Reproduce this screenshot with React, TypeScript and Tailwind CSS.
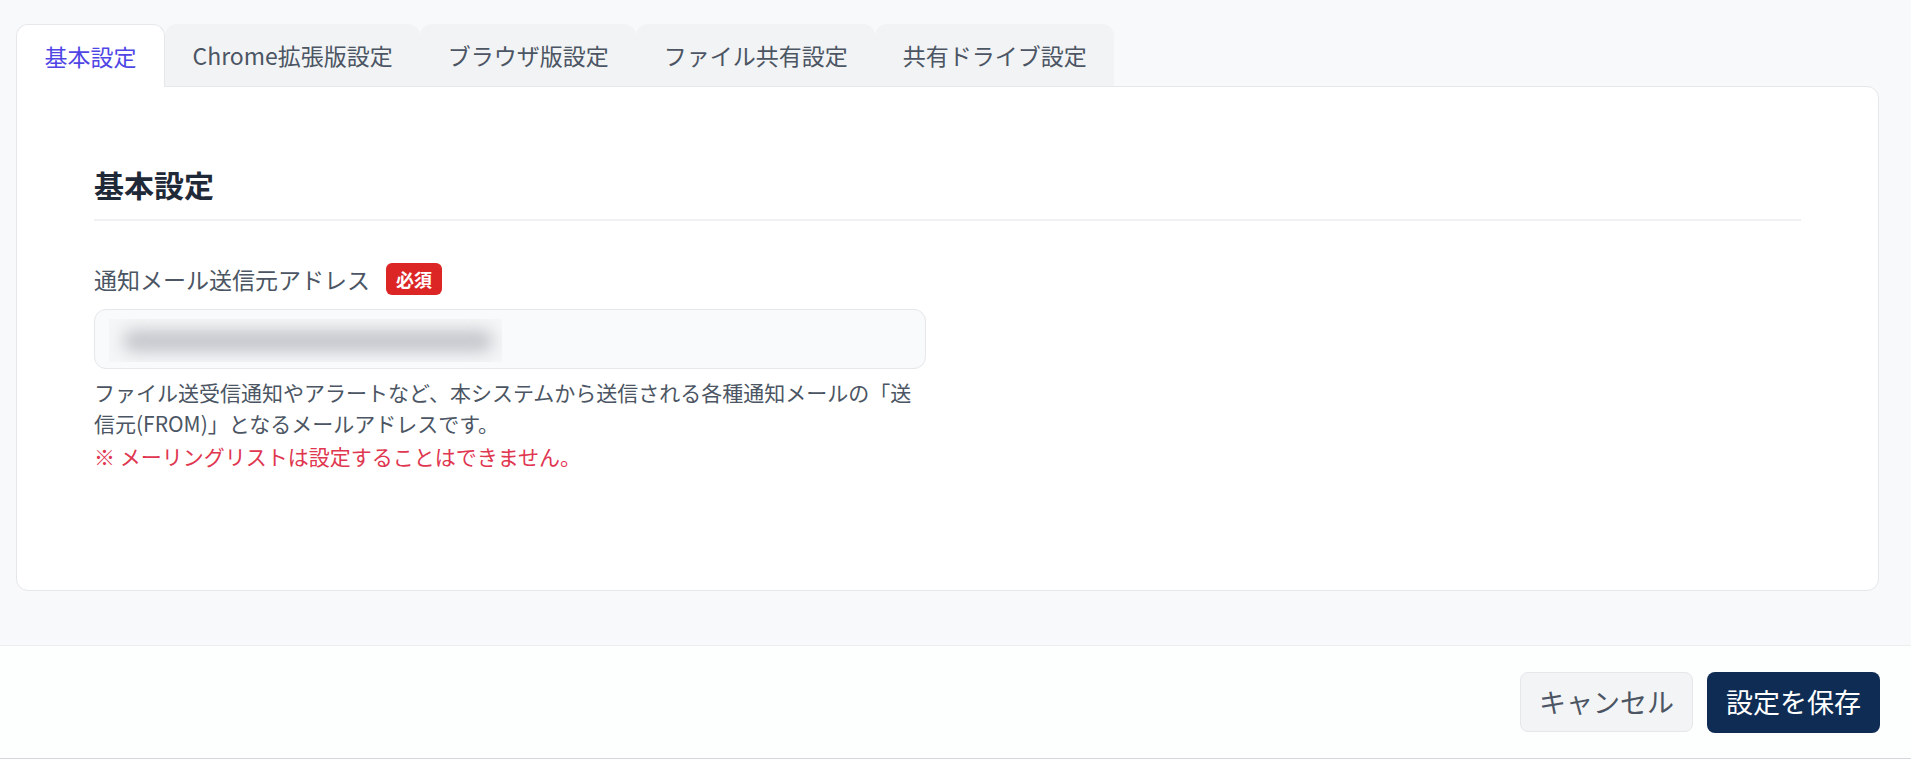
import React, { useState } from "react";

const tabs = [
  "基本設定",
  "Chrome拡張版設定",
  "ブラウザ版設定",
  "ファイル共有設定",
  "共有ドライブ設定",
];

const App = () => {
  const [active, setActive] = useState(0);

  return (
    <div className="h-screen flex flex-col bg-[#f8f9fa] font-['Noto_Sans_CJK_JP','Noto_Sans',sans-serif]">
      <main className="flex-1 flex flex-col pt-[24px] pl-[16px] pr-[32px] pb-[54px]">
        {/* tabs */}
        <div className="flex h-[62px]">
          {tabs.map((t, idx) => (
            <button
              key={t}
              onClick={() => setActive(idx)}
              className={
                idx === active
                  ? "relative z-10 -mb-px px-[27.5px] rounded-t-xl border border-b-0 border-[#e5e7eb] bg-white text-[23px] text-[#4f46e5]"
                  : "px-[27.5px] rounded-t-xl bg-[#f2f3f5] text-[23px] text-[#4b5563]"
              }
            >
              {t}
            </button>
          ))}
        </div>

        {/* card */}
        <div className="flex-1 bg-white border border-[#e5e7eb] rounded-b-xl rounded-tr-xl px-[77px] pt-[77px]">
          <h2 className="text-[30px] leading-[40px] font-bold text-[#1f2937] pb-[15px] border-b-2 border-[#f0f1f3]">
            基本設定
          </h2>

          <div className="w-[832px] mt-[42px]">
            <div className="flex items-center h-[32px]">
              <label className="text-[23px] text-[#4b5563]">
                通知メール送信元アドレス
              </label>
              <span className="ml-[16px] h-[32px] px-[10px] flex items-center rounded-md bg-[#dc2626] text-white text-[18px] font-bold">
                必須
              </span>
            </div>

            <div className="mt-[14px] h-[60px] rounded-xl border border-[#e5e7eb] bg-[#f9fafb] pl-[14px] pt-[9px]">
              <div className="w-[393px] h-[43px] bg-[#f5f6f7] overflow-hidden flex items-center">
                <div className="ml-[14px] w-[370px] h-[22px] rounded-full bg-[#c3c6cb] blur-[8px]" />
              </div>
            </div>

            <p className="mt-[8px] text-[21px] leading-[31px] text-[#4b5563] whitespace-nowrap">
              ファイル送受信通知やアラートなど、本システムから送信される各種通知メールの「送
              <br />
              信元(FROM)」となるメールアドレスです。
            </p>
            <p className="mt-[2px] text-[21px] leading-[31px] text-[#e0364f]">
              ※ メーリングリストは設定することはできません。
            </p>
          </div>
        </div>
      </main>

      <footer className="h-[114px] shrink-0 flex items-center justify-end gap-[14px] pr-[31px] bg-[#fdfefe] border-t border-b border-t-[#eceef0] border-b-[#d4d6d9]">
        <button className="w-[173px] h-[60px] rounded-lg border border-[#e5e7eb] bg-[#f3f4f6] text-[27px] text-[#4b5563]">
          キャンセル
        </button>
        <button className="w-[173px] h-[61px] rounded-lg bg-[#0e2c54] text-[27px] text-white">
          設定を保存
        </button>
      </footer>
    </div>
  );
};

export default App;
